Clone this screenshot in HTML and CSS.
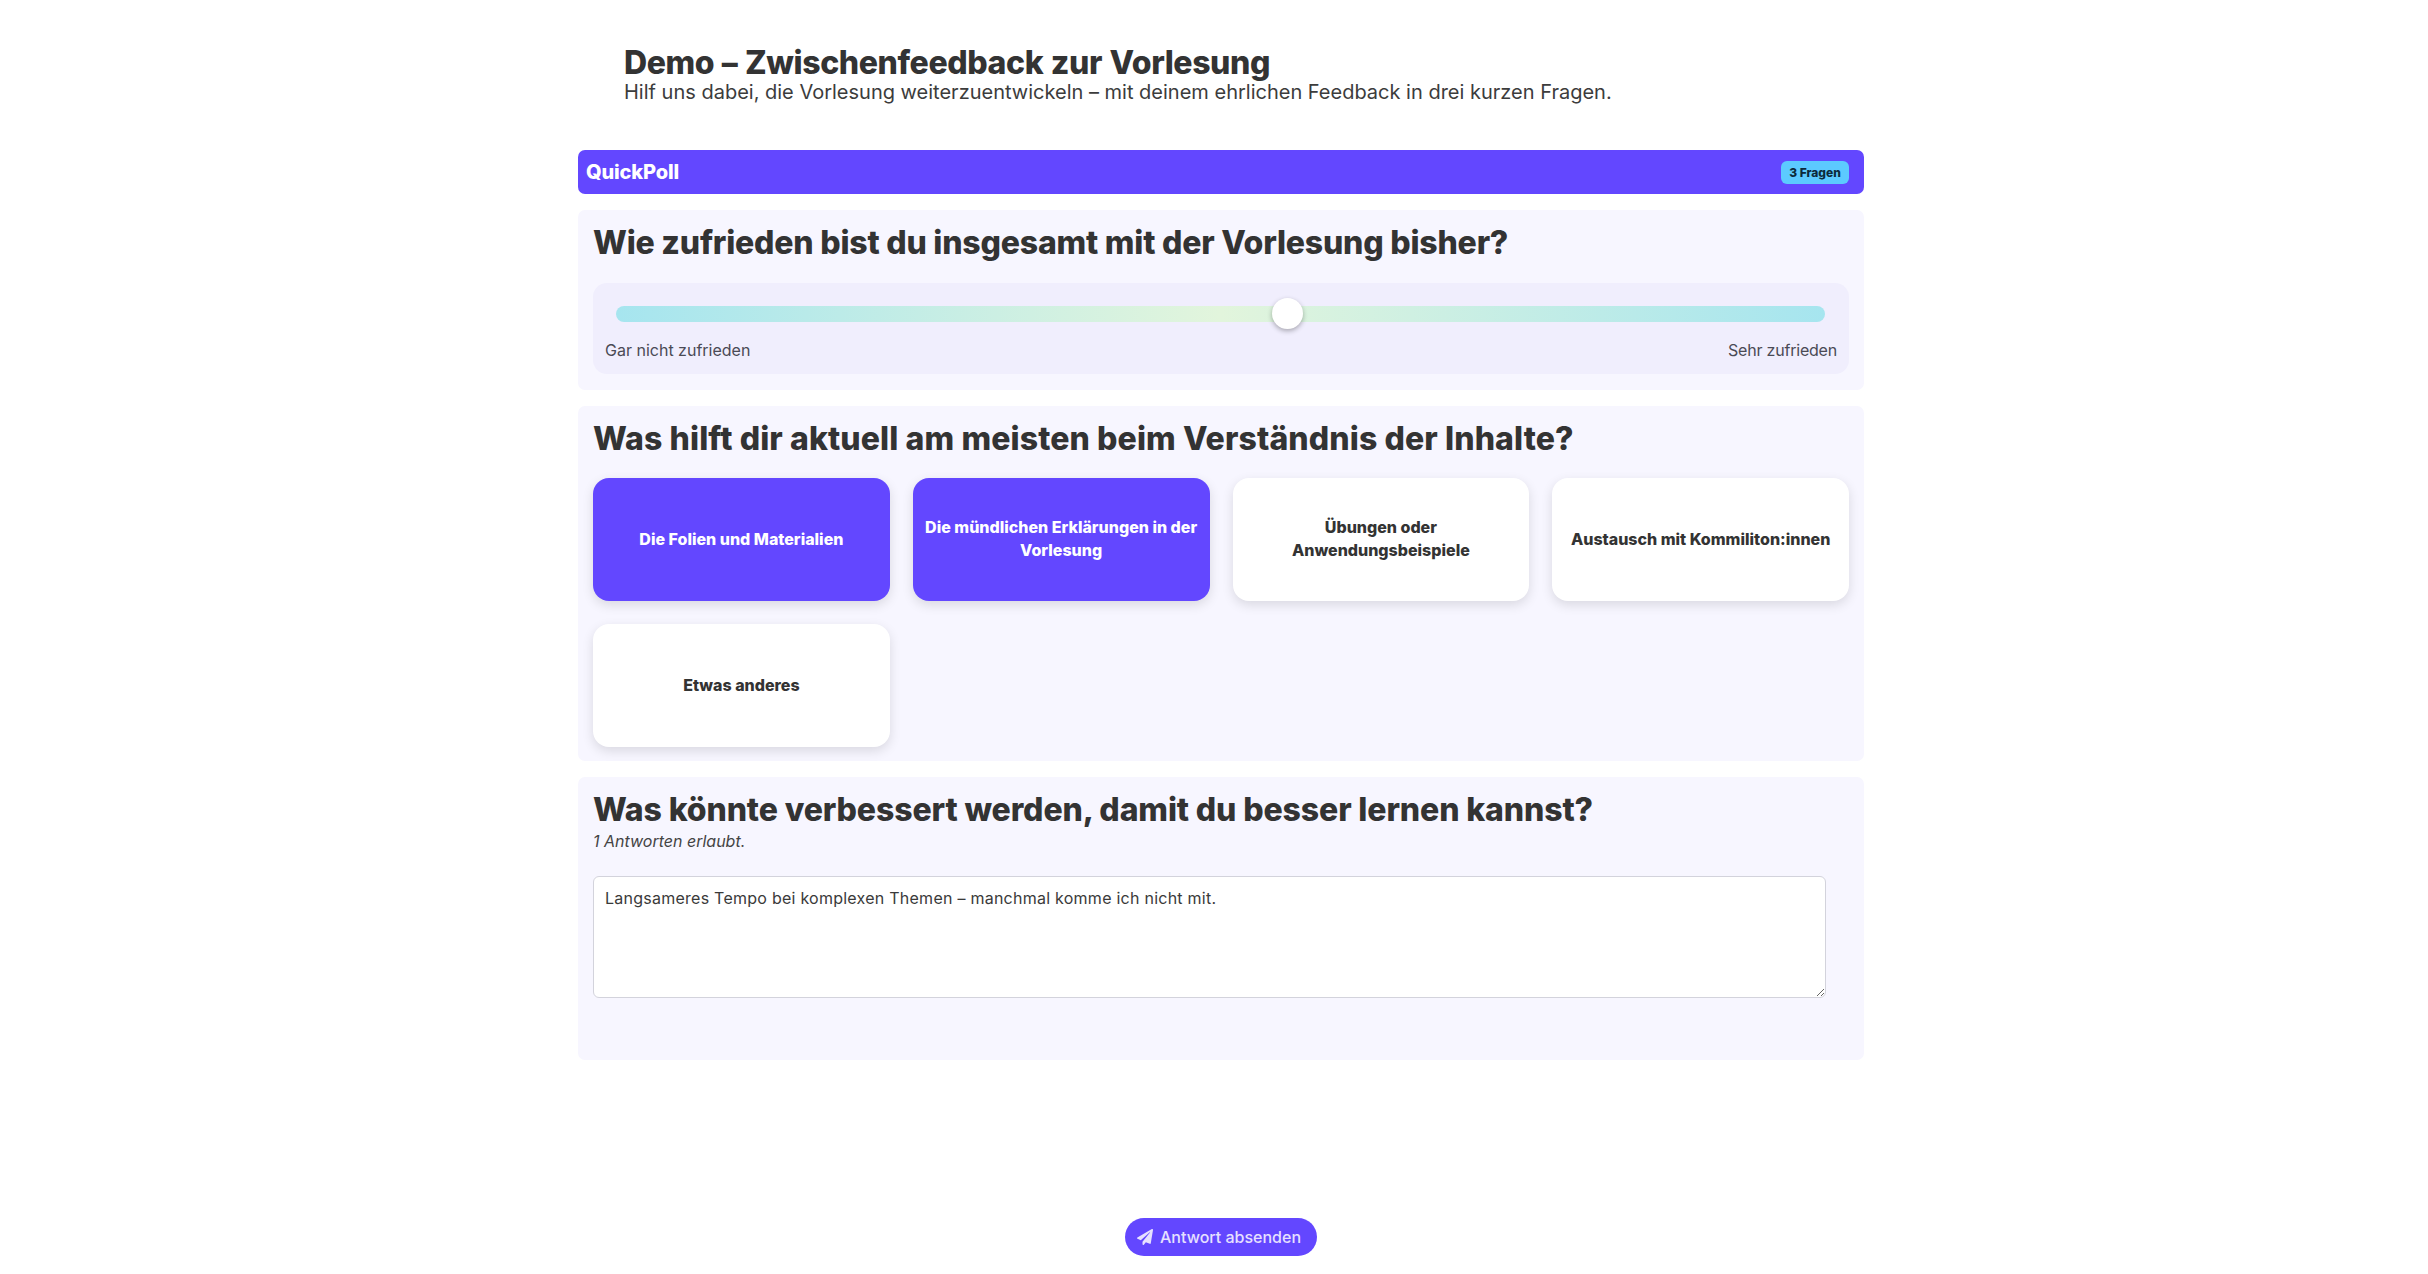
FILE: index.html
```html
<!DOCTYPE html>
<html lang="de">
<head>
<meta charset="utf-8">
<title>QuickPoll</title>
<link rel="stylesheet" href="styles.css">
</head>
<body>
<div class="page">
  <header class="intro">
    <h1>Demo – Zwischenfeedback zur Vorlesung</h1>
    <p>Hilf uns dabei, die Vorlesung weiterzuentwickeln – mit deinem ehrlichen Feedback in drei kurzen Fragen.</p>
  </header>
  <div class="bar">
    <span class="brand">QuickPoll</span>
    <span class="badge">3 Fragen</span>
  </div>
  <section class="card card-slider">
    <h2>Wie zufrieden bist du insgesamt mit der Vorlesung bisher?</h2>
    <div class="slider-panel">
      <input class="slider" type="range" min="0" max="1000" value="557" aria-label="Zufriedenheit">
      <div class="slider-labels"><span>Gar nicht zufrieden</span><span class="label-end">Sehr zufrieden</span></div>
    </div>
  </section>
  <section class="card card-options">
    <h2>Was hilft dir aktuell am meisten beim Verständnis der Inhalte?</h2>
    <div class="options">
      <button class="option selected">Die Folien und Materialien</button>
      <button class="option selected">Die mündlichen Erklärungen in der Vorlesung</button>
      <button class="option">Übungen oder Anwendungsbeispiele</button>
      <button class="option">Austausch mit Kommiliton:innen</button>
      <button class="option">Etwas anderes</button>
    </div>
  </section>
  <section class="card card-text">
    <h2>Was könnte verbessert werden, damit du besser lernen kannst?</h2>
    <p class="hint">1 Antworten erlaubt.</p>
    <textarea class="answer">Langsameres Tempo bei komplexen Themen – manchmal komme ich nicht mit.</textarea>
  </section>
  <div class="actions">
    <button class="submit">
      <svg class="submit-icon" viewBox="0 0 512 512" aria-hidden="true"><path fill="currentColor" d="M476 3L12 271c-18 10-16 36 3 44l106 44L408 106c5-5 13 2 8 8L176 406v80c0 23 28 33 43 15l64-78 125 52c14 6 31-3 33-19L512 28c3-21-18-36-36-25z"/></svg>
      <span>Antwort absenden</span>
    </button>
  </div>
</div>
</body>
</html>
```
FILE: styles.css
```css
* { box-sizing: border-box; }
html, body { margin: 0; height: 100%; }
body {
  background: #fff;
  color: #333;
  font-family: "Inter", "Open Sans", sans-serif;
  padding-left: 14px;
  overflow: hidden;
}
.page {
  width: 1286px;
  height: 1274px;
  margin: 0 auto;
  display: flex;
  flex-direction: column;
}
.intro { padding: 44px 0 0 46px; height: 150px; }
.intro h1 { margin: 0; font-size: 32px; line-height: 38px; font-weight: 800; letter-spacing: -0.4px; word-spacing: 1px; color: #333; }
.intro p { margin: -1px 0 0; font-size: 20px; line-height: 22px; font-weight: 400; color: #3c3c3c; }
.bar {
  height: 44px;
  background: #6347ff;
  border-radius: 7px;
  display: flex;
  align-items: center;
  justify-content: space-between;
  padding: 0 15px 0 8px;
  color: #fff;
}
.brand { font-size: 20px; font-weight: 800; letter-spacing: -0.15px; }
.badge {
  height: 23px;
  width: 68px;
  background: #5ccaff;
  border-radius: 6px;
  color: #0c2a3c;
  font-size: 12px;
  font-weight: 800;
  display: flex;
  align-items: center;
  justify-content: center;
}
.card {
  background: #f7f6ff;
  border-radius: 7px;
  padding: 15px;
  margin-top: 16px;
}
.card h2 { margin: 0; font-size: 32px; line-height: 36px; font-weight: 800; color: #333; }
.card-slider { height: 180px; }
.card-slider h2 { letter-spacing: -0.2px; }
.card-options h2 { letter-spacing: 0.11px; }
.card-text h2 { letter-spacing: -0.12px; }
.slider-panel {
  margin-top: 22px;
  height: 91px;
  background: #f0eefd;
  border-radius: 14px;
  padding: 15px 12px 0;
}
.slider {
  display: block;
  -webkit-appearance: none;
  appearance: none;
  width: 1209px;
  height: 32px;
  margin: 0 0 0 11px;
  background: transparent;
}
.slider::-webkit-slider-runnable-track {
  height: 16px;
  border-radius: 8px;
  background: linear-gradient(90deg, #a6e5ef 0%, #e2f5dc 50%, #a6e5ef 100%);
}
.slider::-webkit-slider-thumb {
  -webkit-appearance: none;
  appearance: none;
  width: 31px;
  height: 31px;
  margin-top: -8px;
  border-radius: 50%;
  background: #fff;
  box-shadow: 0 2px 5px rgba(0, 0, 0, .3);
}
.slider-labels {
  display: flex;
  justify-content: space-between;
  margin-top: 8px;
  font-size: 16px;
  line-height: 24px;
  color: #4a4a55;
}
.label-end { letter-spacing: -0.2px; }
.card-options { height: 355px; }
.options {
  margin-top: 21px;
  display: grid;
  grid-template-columns: repeat(4, 1fr);
  grid-auto-rows: 123px;
  gap: 23px;
}
.option {
  border: 0;
  border-radius: 16px;
  background: #fff;
  color: #333;
  font: 800 16px/23px "Inter", sans-serif;
  padding: 0 12px 1px;
  box-shadow: 0 4px 12px rgba(0, 0, 0, .12);
}
.option.selected { background: #6347ff; color: #fff; }
.card-text { height: 283px; }
.hint { margin: 2px 0 0; font-size: 16px; line-height: 22px; font-style: italic; color: #444; }
.answer {
  display: block;
  width: 1233px;
  height: 122px;
  margin-top: 24px;
  padding: 10px 11px;
  border: 1px solid #d3d3dc;
  border-radius: 6px;
  background: #fff;
  color: #3a3a3a;
  font: 400 16px/22px "Inter", sans-serif;
  letter-spacing: 0.25px;
  outline: 0;
}
.actions { margin-top: auto; padding-bottom: 18px; display: flex; justify-content: center; }
.submit {
  width: 192px;
  height: 38px;
  border: 0;
  border-radius: 19px;
  background: #6347ff;
  color: #e6e0ff;
  font: 500 16px "Inter", sans-serif;
  display: flex;
  align-items: center;
  justify-content: center;
  gap: 7px;
  padding: 0 4px 0 0;
}
.submit-icon { width: 16px; height: 16px; }
```
